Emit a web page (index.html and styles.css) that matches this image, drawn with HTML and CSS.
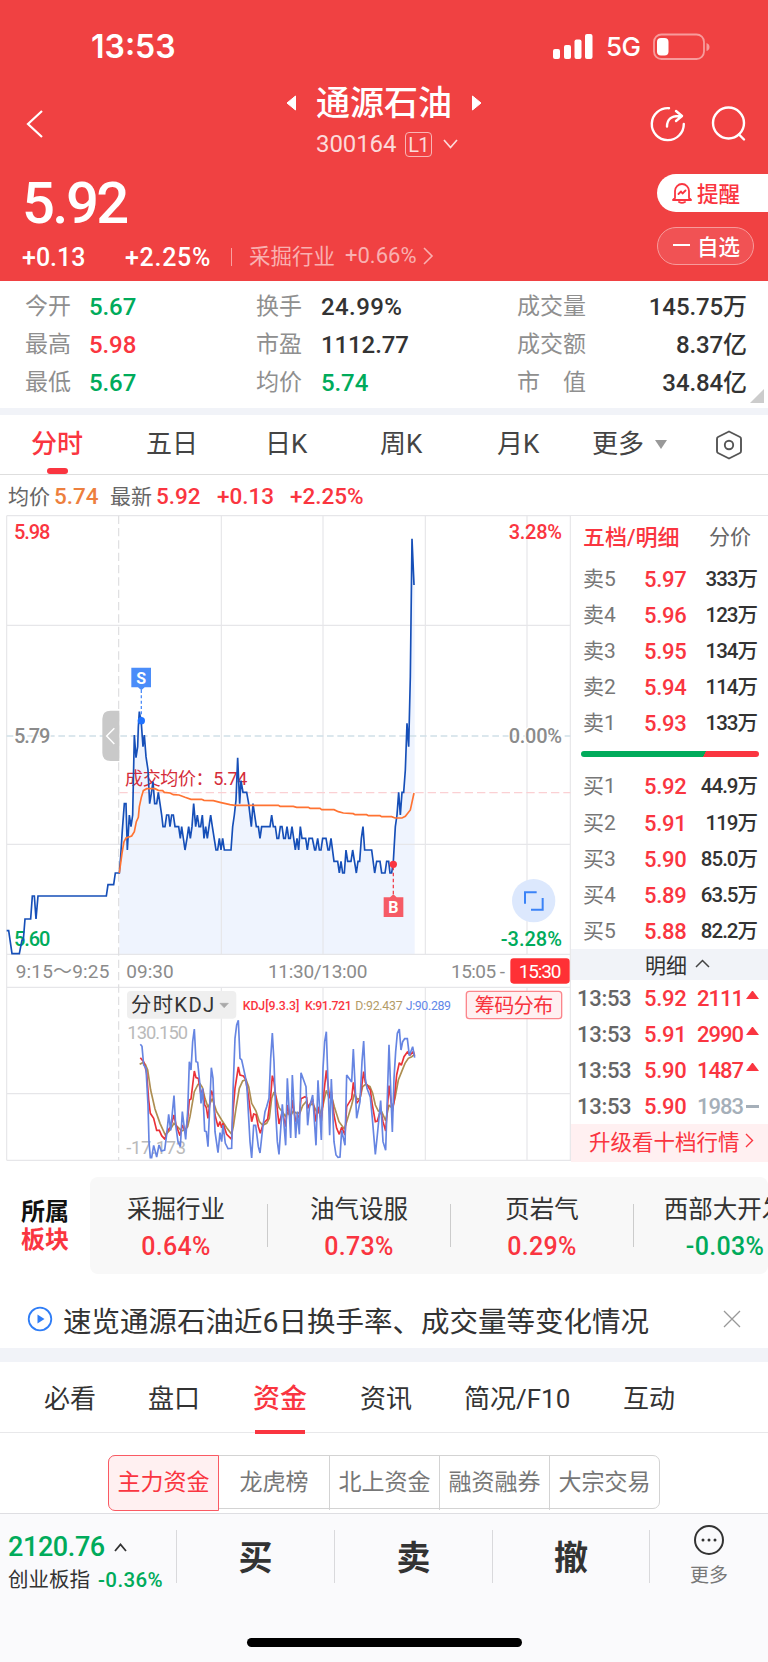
FILE: index.html
```html
<!DOCTYPE html>
<html lang="zh-CN">
<head>
<meta charset="utf-8">
<title>通源石油 300164</title>
<link rel="stylesheet" href="styles.css">
</head>
<body>
<header class="header">
  <div class="status">
    <span class="clock">13:53</span>
    <svg class="signal" width="40" height="26" viewBox="0 0 40 26" fill="#fff"><rect x="0" y="15" width="7" height="10" rx="2"/><rect x="11" y="11" width="7" height="14" rx="2"/><rect x="21.500" y="5.500" width="7" height="19.500" rx="2"/><rect x="32" y="0" width="7.500" height="25" rx="2"/></svg>
    <span class="net">5G</span>
    <svg class="battery" width="58" height="28" viewBox="0 0 58 28"><rect x="1" y="1.500" width="50" height="24.500" rx="7.500" fill="none" stroke="#f79b9b" stroke-width="1.800"/><rect x="4" y="5" width="11.500" height="17.500" rx="4" fill="#fff"/><path d="M53.500 10q3 1 3 4t-3 4z" fill="#f79b9b"/></svg>
  </div>
  <div class="nav">
    <svg class="back" width="18" height="30" viewBox="0 0 18 30" fill="none" stroke="#fff" stroke-width="2.200"><path d="M16 2 2 15l14 13"/></svg>
    <div class="title">
      <div class="name"><svg width="11" height="16" viewBox="0 0 11 16"><path d="M9.500 1v14L1 8z" fill="#fff" stroke="#fff" stroke-linejoin="round"/></svg><b>通源石油</b><svg width="11" height="16" viewBox="0 0 11 16"><path d="M1.500 1v14L10 8z" fill="#fff" stroke="#fff" stroke-linejoin="round"/></svg></div>
      <div class="code"><span>300164</span><i class="level">L1</i><svg width="15" height="10" viewBox="0 0 15 10" fill="none" stroke="#fcdada" stroke-width="1.700"><path d="m1 1 6.500 7.500L14 1"/></svg></div>
    </div>
    <div class="actions">
      <svg width="36" height="36" viewBox="0 0 36 36" fill="none" stroke="#fff" stroke-width="2.400" stroke-linecap="round" stroke-linejoin="round"><path d="M19 2.200A16 16 0 1 0 33.800 18M17 20.500c0-7 4-10.500 12-10.500M26 5l6 5-6 5"/></svg>
      <svg width="36" height="36" viewBox="0 0 36 36" fill="none" stroke="#fff" stroke-width="2.400" stroke-linecap="round"><circle cx="17.500" cy="17" r="15.500"/><path d="m28 28.500 5 5"/></svg>
    </div>
  </div>
  <div class="quote">
    <div class="prices">
      <div class="last">5.92</div>
      <div class="change"><span>+0.13</span><span class="pct">+2.25%</span><i class="bar"></i><span class="industry">采掘行业</span><span class="indpct">+0.66%</span><svg width="11" height="18" viewBox="0 0 11 18" fill="none" stroke="#f9b0b0" stroke-width="1.600"><path d="m1 1 8 8-8 8"/></svg></div>
    </div>
    <div class="buttons">
      <div class="remind"><svg width="22" height="22" viewBox="0 0 22 22" fill="none" stroke="#fa3540" stroke-width="1.800" stroke-linejoin="round" stroke-linecap="round"><path d="M4 16V9a7 7 0 0 1 14 0v7l2 2H2zM8 20q3 1.800 6 0M7.500 12l2.500-2.500 1.500 2 3-3"/></svg>提醒</div>
      <div class="fav"><i></i>自选</div>
    </div>
  </div>
</header>

<section class="stats">
  <span>今开</span><b class="green">5.67</b><span>换手</span><b class="wide">24.99%</b><span>成交量</span><b class="end">145.75万</b>
  <span>最高</span><b class="red">5.98</b><span>市盈</span><b>1112.77</b><span>成交额</span><b class="end">8.37亿</b>
  <span>最低</span><b class="green">5.67</b><span>均价</span><b class="green">5.74</b><span>市　值</span><b class="end">34.84亿</b>
  <i class="corner"></i>
</section>

<nav class="periods">
  <span class="on">分时</span><span>五日</span><span>日K</span><span>周K</span><span>月K</span><span class="more">更多<i></i></span>
  <svg width="28" height="30" viewBox="0 0 28 30" fill="none" stroke="#555" stroke-width="1.900" stroke-linejoin="round"><path d="M14 1.500 25 7q1 .5 1 2v12q0 1.500-1 2l-11 5.500L3 23q-1-.5-1-2V9q0-1.500 1-2z"/><circle cx="14" cy="15" r="4.200"/></svg>
</nav>

<div class="summary"><span>均价</span><b class="orange">5.74</b><span>最新</span><b>5.92</b><b>+0.13</b><b>+2.25%</b></div>

<main class="market">
  <svg class="chart" width="571" height="646" viewBox="0 15 1713 1938">
    <path d="M358 1089L362 1040 367 960 373 881 378 881 382 1020 388 915 393 950 398 915 403 675 408 743 413 710 418 605 424 640 429 710 433 675 444 780 449 881 459 815 464 881 475 847 489 950 506 915 536 950 555 1020 566 950 576 950 581 881 587 950 607 915 617 950 632 915 648 1020 693 1020 698 950 708 870 713 743 719 881 723 812 729 847 740 847 754 950 759 881 769 950 810 950 815 915 831 985 876 950 886 1020 901 950 906 985 922 1020 937 985 963 1020 993 985 1002 1054 1033 1089 1038 1020 1053 1054 1069 1089 1079 1054 1089 950 1094 1020 1115 1020 1124 1089 1140 1054 1155 1089 1166 1054 1175 1089 1180 1054 1186 950 1196 847 1201 915 1206 847 1211 847 1216 780 1221 640 1226 710 1231 500 1236 86 1244 225V1333H358Z" fill="#eff4fe"/>
    <g stroke="#e6e6e9" stroke-width="3.500" fill="none"><path d="M20 17H1713M20 346H1711M20 1003H1711M20 1333H1711M20 1432H1711M20 1751H1711M20 1951H1713M20 17V1951M664 17V1333M969 17V1333M1276 17V1333M1581 17V1333M664 1432V1951M969 1432V1951M1276 1432V1951M1581 1432V1951M1711 17V1951"/><path d="M356 17V1951" stroke-dasharray="25 12" stroke="#dedee0"/></g>
    <path d="M20 678H1711" stroke="#d0dfe8" stroke-width="4" stroke-dasharray="20 11"/>
    <path d="M358 848H1711" stroke="#fbd0d3" stroke-width="4" stroke-dasharray="25 12"/>
    <path d="M358 602H332q-25 0-25 25V728q0 25 25 25H358Z" fill="#c9c9c9"/>
    <path d="m343 655-23 23 23 24" fill="none" stroke="#fff" stroke-width="4.500"/>
    <g class="num" font-size="60">
      <text x="42" y="86" textLength="109" class="t-red">5.98</text><text x="1526" y="86" textLength="160" class="t-red">3.28%</text>
      <text x="42" y="698" textLength="109" class="t-gray t-mid">5.79</text><text x="1526" y="698" textLength="160" class="t-gray t-mid">0.00%</text>
      <text x="42" y="1307" textLength="109" class="t-green">5.60</text><text x="1502" y="1307" textLength="184" class="t-green">-3.28%</text>
    </g>
    <text class="num avg" x="375" y="826" font-size="54" textLength="367">成交均价：5.74</text>
    <g fill="none" stroke-width="5" stroke-linejoin="miter" stroke-miterlimit="2">
      <path stroke="#164fb8" d="M20 1262L26 1262 36 1331 58 1331 66 1290 70 1290 75 1227 92 1227 97 1158 103 1158 108 1227 114 1158 319 1158 324 1124 341 1124 346 1089 358 1089 362 1040 367 960 373 881 378 881 382 1020 388 915 393 950 398 915 403 675 408 743 413 710 415 650 418 605 424 640 429 710 433 675 438 740 444 780 449 881 454 850 459 815 464 881 470 881 475 847 480 881 485 915 489 950 495 950 500 915 506 915 510 950 515 915 520 915 525 950 536 950 541 985 545 950 555 1020 561 985 566 950 571 985 576 950 581 881 587 950 592 915 597 950 602 950 607 915 612 985 617 950 622 985 632 915 637 950 648 1020 653 1020 658 985 663 1020 668 985 673 1020 693 1020 698 950 703 915 708 870 713 743 719 881 723 812 729 847 740 847 746 881 754 950 759 881 769 950 775 950 780 985 785 950 810 950 815 915 820 950 826 950 831 985 836 985 841 950 846 950 851 985 856 985 861 950 866 985 871 985 876 950 886 1020 891 985 896 1020 901 950 906 985 917 985 922 1020 927 985 937 985 944 1020 947 1020 953 985 958 1020 963 1020 968 985 978 985 984 1020 988 1020 993 985 1002 1054 1013 1054 1018 1089 1023 1054 1028 1089 1033 1089 1038 1020 1043 1054 1053 1054 1058 1020 1069 1089 1074 1054 1079 1054 1084 985 1089 950 1094 1020 1115 1020 1124 1089 1130 1054 1140 1054 1145 1089 1155 1089 1160 1054 1166 1054 1170 1089 1175 1089 1180 1054 1186 950 1191 915 1196 847 1201 915 1206 847 1211 847 1216 780 1221 640 1226 710 1231 500 1236 86 1242 225"/>
      <path stroke="#ff7332" d="M358 1089L366 1030 372 995 378 984 395 978 403 965 409 935 415 922 418 890 424 862 430 842 440 836 465 836 475 841 488 842 493 847 510 849 520 854 537 855 555 862 573 868 605 868 612 871 640 872 660 877 690 884 705 886 835 886 840 889 880 889 890 892 925 892 930 895 960 895 965 899 1002 899 1015 905 1030 909 1060 911 1065 914 1100 914 1105 917 1140 917 1145 920 1175 920 1185 924 1206 924 1216 919 1231 900 1242 849"/>
    </g>
    <path d="M424 540V630" stroke="#4f8df7" stroke-width="4" stroke-dasharray="9 7"/><path d="M394 473H453V532H434L424 541 414 532H394Z" fill="#4b8df9"/><circle cx="424" cy="632" r="11" fill="#1f72ff"/><text class="mark" x="423.500" y="521" font-size="48">S</text>
    <path d="M1180 1070V1160" stroke="#ef4450" stroke-width="4" stroke-dasharray="11 7"/><path d="M1151 1221H1210V1162H1190L1180 1153 1170 1162H1151Z" fill="#f65b66"/><circle cx="1180" cy="1063" r="11" fill="#fa3540"/><text class="mark" x="1180" y="1210" font-size="48">B</text>
    <circle cx="1601" cy="1172" r="65" fill="#dce8fd"/><path d="M1575 1181V1147H1610M1628 1164V1199H1593" fill="none" stroke="#3b83f7" stroke-width="6"/>
    <g class="num t-gray" font-size="57">
      <text x="47" y="1405" textLength="281">9:15～9:25</text><text x="379" y="1405" textLength="142">09:30</text><text x="804" y="1405" textLength="298">11:30/13:00</text><text x="1353" y="1405" textLength="162">15:05 -</text>
      <rect x="1531" y="1345" width="178" height="76" rx="10" fill="#ff3035"/><text x="1556" y="1405" textLength="128" fill="#fff">15:30</text>
    </g>
    <rect x="381" y="1443" width="328" height="83" rx="12" fill="#efefef"/><text class="num pick" x="393" y="1506" font-size="61" textLength="250">分时KDJ</text><path d="M660 1480h25l-12.500 13z" fill="#a9a9a9" stroke="#a9a9a9" stroke-width="2"/>
    <rect x="1399" y="1444" width="286" height="82" rx="9" fill="#fff0f1" stroke="#fb868c" stroke-width="4"/><text class="num chip" x="1424" y="1508" font-size="60" textLength="236">筹码分布</text>
    <g class="num" font-size="37"><text x="728" y="1499" textLength="170" class="t-red">KDJ[9.3.3]</text><text x="915" y="1499" textLength="140" class="t-red">K:91.721</text><text x="1066" y="1499" textLength="142" fill="#b39b67">D:92.437</text><text x="1217" y="1499" textLength="136" fill="#6287e8">J:90.289</text></g>
    <g class="num" font-size="55" fill="#bababa"><text x="382" y="1587" textLength="182">130.150</text><text x="379" y="1931" textLength="179">-17.173</text></g>
    <g transform="translate(0 1305)" fill="none" stroke-width="5" stroke-miterlimit="2">
      <path stroke="#ad8e51" d="M419 358L428 353 436 358 443 375 452 435 465 492 480 535 496 570 510 555 522 535 535 548 545 558 557 553 563 545 570 515 583 440 594 418 600 416 607 427 615 460 624 487 637 461 650 500 665 525 680 548 695 568 700 545 708 490 718 430 728 408 738 404 746 425 755 475 768 498 778 530 788 541 800 535 808 520 815 460 822 441 828 455 837 488 847 500 857 515 862 503 872 512 880 498 890 505 900 503 908 482 918 470 925 483 938 476 950 500 960 505 968 485 979 436 986 455 995 455 1003 485 1017 530 1033 552 1040 530 1055 480 1063 447 1072 463 1080 460 1088 425 1097 418 1110 425 1118 445 1126 480 1135 498 1145 500 1157 527 1167 480 1177 490 1185 460 1195 405 1205 380 1215 355 1225 340 1235 335 1244 328"/>
      <path stroke="#eb3137" d="M421 338L432 352 440 385 446 465 451 505 461 520 470 556 478 556 485 572 495 583 501 560 512 545 522 510 528 540 540 572 547 540 557 562 563 520 568 465 573 462 583 378 588 398 595 400 603 450 608 432 614 480 619 488 624 520 634 437 639 450 645 510 654 545 660 530 665 548 669 535 680 568 695 583 699 500 705 430 715 366 720 390 730 393 737 403 745 450 755 530 761 507 768 509 775 545 781 565 790 535 803 522 812 455 817 392 822 410 828 460 837 537 847 500 857 545 862 480 872 525 877 465 887 530 898 510 903 461 915 455 920 458 923 490 938 462 948 530 954 485 964 528 972 440 979 376 989 460 994 440 1002 510 1010 550 1018 568 1025 547 1035 570 1040 485 1055 460 1060 412 1070 475 1080 462 1091 380 1096 412 1111 435 1117 480 1126 530 1132 528 1142 495 1149 530 1157 558 1167 422 1177 500 1182 470 1190 390 1198 353 1204 361 1212 335 1222 321 1230 330 1240 320 1244 332"/>
      <path stroke="#6685e2" d="M421 298L426 304 431 360 438 370 444 480 447 590 451 638 455 638 461 601 470 636 477 600 484 618 494 615 501 560 506 508 512 556 522 452 527 540 534 590 541 605 547 500 557 583 563 500 568 350 573 375 578 290 583 252 588 350 593 352 600 420 603 475 608 430 614 558 619 560 624 605 634 368 639 400 645 560 654 623 660 563 665 590 669 540 676 595 684 611 695 610 699 440 705 280 710 240 715 226 720 340 725 345 736 395 741 430 750 590 755 639 761 541 767 541 775 605 780 624 788 550 795 500 800 485 807 460 812 340 817 264 822 350 827 500 832 590 837 628 847 478 857 601 862 400 872 579 877 390 887 579 892 500 898 568 903 383 918 425 923 541 928 490 938 450 948 601 954 406 964 585 969 370 974 290 979 260 989 571 994 402 1002 590 1008 630 1014 637 1020 636 1025 556 1035 601 1040 390 1055 411 1060 312 1070 520 1080 470 1086 350 1091 288 1096 400 1101 430 1111 457 1117 520 1126 628 1132 570 1142 467 1149 590 1157 616 1167 299 1177 561 1182 400 1187 320 1192 265 1198 252 1203 315 1208 290 1214 281 1222 281 1228 332 1238 305 1244 338"/>
    </g>
  </svg>
  <aside class="book">
    <div class="booktabs"><b>五档/明细</b><span>分价</span></div>
    <div class="lv"><span>卖5</span><b>5.97</b><em>333万</em></div>
    <div class="lv"><span>卖4</span><b>5.96</b><em>123万</em></div>
    <div class="lv"><span>卖3</span><b>5.95</b><em>134万</em></div>
    <div class="lv"><span>卖2</span><b>5.94</b><em>114万</em></div>
    <div class="lv"><span>卖1</span><b>5.93</b><em>133万</em></div>
    <div class="ratio"><i></i></div>
    <div class="lv"><span>买1</span><b>5.92</b><em>44.9万</em></div>
    <div class="lv"><span>买2</span><b>5.91</b><em>119万</em></div>
    <div class="lv"><span>买3</span><b>5.90</b><em>85.0万</em></div>
    <div class="lv"><span>买4</span><b>5.89</b><em>63.5万</em></div>
    <div class="lv"><span>买5</span><b>5.88</b><em>82.2万</em></div>
    <div class="detail">明细<svg width="15" height="9" viewBox="0 0 15 9" fill="none" stroke="#444" stroke-width="1.500"><path d="m1 8 6.500-6.500L14 8"/></svg></div>
    <div class="tick"><span>13:53</span><b>5.92</b><em>2111</em><i class="up"></i></div>
    <div class="tick"><span>13:53</span><b>5.91</b><em>2990</em><i class="up"></i></div>
    <div class="tick"><span>13:53</span><b>5.90</b><em>1487</em><i class="up"></i></div>
    <div class="tick flat"><span>13:53</span><b>5.90</b><em>1983</em><i class="dash"></i></div>
    <div class="upgrade">升级看十档行情<svg width="9" height="15" viewBox="0 0 9 15" fill="none" stroke="#fa3540" stroke-width="1.400"><path d="m1 1 6.500 6.500L1 14"/></svg></div>
  </aside>
</main>

<section class="sectors">
  <div class="label"><span>所属</span><b>板块</b></div>
  <div class="cards">
    <div class="card"><span>采掘行业</span><b>0.64%</b></div>
    <div class="card"><span>油气设服</span><b>0.73%</b></div>
    <div class="card"><span>页岩气</span><b>0.29%</b></div>
    <div class="card"><span>西部大开发</span><b class="green">-0.03%</b></div>
  </div>
</section>

<div class="news">
  <svg width="26" height="26" viewBox="0 0 26 26"><circle cx="13" cy="13" r="11.300" fill="none" stroke="#2f7df6" stroke-width="1.800"/><path d="M10.500 8.500v9l7-4.500z" fill="#2f7df6"/></svg>
  <span>速览通源石油近6日换手率、成交量等变化情况</span>
  <svg width="18" height="18" viewBox="0 0 18 18" stroke="#999" stroke-width="1.300"><path d="m1 1 16 16M17 1 1 17"/></svg>
</div>

<nav class="tabs"><span>必看</span><span>盘口</span><span class="on">资金</span><span>资讯</span><span>简况/F10</span><span>互动</span></nav>

<div class="segwrap"><div class="segments"><span class="on">主力资金</span><span>龙虎榜</span><span>北上资金</span><span>融资融券</span><span>大宗交易</span></div></div>

<footer class="footer">
  <div class="trade">
    <div class="index"><div class="points">2120.76<svg width="13" height="9" viewBox="0 0 13 9" fill="none" stroke="#333" stroke-width="1.800"><path d="m1 8 5.500-6.500L12 8"/></svg></div><div class="idxname">创业板指<b>-0.36%</b></div></div>
    <div class="act">买</div><div class="act">卖</div><div class="act">撤</div>
    <div class="dots"><svg width="32" height="32" viewBox="0 0 32 32"><circle cx="16" cy="16" r="14" fill="none" stroke="#333" stroke-width="2"/><g fill="#333"><circle cx="10" cy="16" r="1.500"/><circle cx="16" cy="16" r="1.500"/><circle cx="22" cy="16" r="1.500"/></g></svg><span>更多</span></div>
  </div>
  <i class="home"></i>
</footer>
</body>
</html>
```
FILE: styles.css
```css
* { box-sizing: border-box; }
body { margin: 0; width: 768px; height: 1662px; overflow: hidden; background: #fff; color: #333; font-family: Roboto, "Noto Sans CJK SC", sans-serif; white-space: nowrap; }
b { font-weight: 500; }
i, em { font-style: normal; }
svg { display: block; flex: none; }
.red { color: #fa3540; }
.green { color: #00ab5b; }

.header { height: 281px; background: #f04142; color: #fff; }
.status { display: flex; align-items: center; height: 84px; padding: 9px 57px 0 91px; }
.clock { flex: 1; font: 600 32px/40px Inter, sans-serif; letter-spacing: 0; }
.signal { margin-right: 13px; }
.net { width: 36px; font: 500 26px/40px Inter, sans-serif; letter-spacing: -.5px; margin-right: 11px; }
.nav { display: grid; grid-template-columns: 240px 288px 240px; height: 84px; }
.back { margin: 25px 0 0 26px; }
.name { display: flex; align-items: center; justify-content: center; gap: 19px; height: 38px; }
.name b { font-size: 34px; line-height: 38px; }
.code { display: flex; align-items: center; height: 44px; padding-left: 76px; font-size: 24px; color: #fcdada; }
.code span { width: 89px; letter-spacing: -.1px; }
.level { width: 27px; height: 25px; margin-right: 11px; border: 1px solid #f9b5b5; border-radius: 4px; font-size: 20px; line-height: 24px; text-align: center; letter-spacing: -.8px; }
.actions { display: flex; gap: 25px; padding: 22px 0 0 122px; }
.quote { display: flex; justify-content: space-between; }
.last { height: 70px; padding-left: 22px; font-weight: 500; font-size: 58px; line-height: 70px; letter-spacing: -2.600px; }
.change { display: grid; grid-template-columns: 103px 106px 18px 96px 78px 12px; align-items: center; height: 38px; padding-left: 22px; font-size: 25px; font-weight: 500; }
.change .pct { letter-spacing: .7px; }
.bar { width: 1px; height: 18px; background: #f9a0a0; }
.change .industry { padding-bottom: 5px; font-size: 21.500px; font-weight: 400; color: #f9b0b0; }
.change .indpct { padding-bottom: 3px; font-size: 22px; font-weight: 400; color: #f9b0b0; }
.change svg { margin-top: -3px; }
.buttons { width: 111px; padding-top: 6px; font-size: 21.500px; font-weight: 500; }
.remind { display: flex; align-items: center; gap: 4px; height: 38px; padding: 0 0 1px 14px; background: #fff; color: #fa3540; border-radius: 19px 0 0 19px; }
.fav { display: flex; align-items: center; gap: 7px; width: 97px; height: 38px; margin-top: 15px; padding: 0 0 2px 15px; border: 1px solid #f79b9b; border-radius: 19px; background: #f15254; }
.fav i { width: 17px; height: 2px; background: #fff; }

.stats { position: relative; display: grid; grid-template-columns: 64px 167px 65px 196px 110px 120px; grid-template-rows: repeat(3, 37.700px); align-items: center; height: 127px; padding: 7px 0 0 25px; font-size: 24px; }
.stats span { padding-bottom: 5px; font-size: 23px; color: #8f8f8f; }
.stats b { letter-spacing: -.1px; padding-top: 1px; }
.stats .wide { letter-spacing: .4px; }
.stats .end { padding: 0 0 4px; text-align: right; }
.corner { position: absolute; right: 4px; bottom: 5px; border: solid transparent; border-width: 0 0 14px 14px; border-bottom-color: #ccc; }

.periods { display: flex; align-items: center; height: 67px; border-top: 7px solid #f1f3f8; border-bottom: 1px solid #dedede; padding-left: 31px; font-size: 26px; color: #444; }
.periods span { position: relative; width: 115px; line-height: 61px; }
.periods span:nth-child(2) { width: 119px; }
.periods span:nth-child(3) { width: 115px; }
.periods span:nth-child(4) { width: 117px; }
.periods span:nth-child(5) { width: 95px; }
.periods .more { display: flex; align-items: center; gap: 11px; width: 123px; }
.more i { border: solid transparent; border-width: 9px 6.500px 0; border-top-color: #999; }
.periods .on { color: #fa3540; font-weight: 500; }
.periods .on::after { content: ""; position: absolute; left: 16px; bottom: 1px; width: 21px; height: 6px; border-radius: 3px; background: #fa3540; }

.summary { display: grid; grid-template-columns: 46px 56px 46px 61px 73px 90px; align-items: center; height: 40px; padding: 2px 0 0 8px; font-size: 22.500px; color: #fa3540; }
.summary span { padding-bottom: 3px; font-size: 21px; color: #666; }
.summary b { letter-spacing: 0; }
.summary .orange { color: #ed7f3e; }

.market { display: flex; height: 646px; }
.num { font-family: Roboto, "Noto Sans CJK SC", sans-serif; }
.t-red { fill: #fa3540; font-weight: 500; }
.t-gray { fill: #8b8b8b; }
.t-mid { paint-order: stroke; stroke: #fff; stroke-width: 8px; font-weight: 500; }
.t-green { fill: #00ab5b; font-weight: 500; }
.avg { fill: #d52d3a; }
.pick { fill: #333; }
.chip { fill: #f8333d; }
.mark { fill: #fff; font-family: Roboto, sans-serif; font-weight: 700; text-anchor: middle; }

.book { width: 197px; border-top: 1px solid #e6e6e9; }
.booktabs { display: flex; justify-content: space-between; height: 46px; padding: 0 17px 0 12px; line-height: 43px; font-size: 21px; color: #666; }
.booktabs b { color: #fa3540; font-size: 22px; }
.lv { display: grid; grid-template-columns: 61px 40px 1fr; height: 36.100px; line-height: 35px; padding: 0 11px 0 12px; font-size: 22px; }
.lv span { font-size: 21px; color: #777; }
.lv b, .tick b { color: #fa3540; letter-spacing: -.3px; }
.lv em { text-align: right; font-weight: 500; font-size: 20.500px; letter-spacing: -1px; }
.ratio { height: 6px; margin: 9px 9px 12px 10px; background: linear-gradient(120deg, #00ab5b 69%, #fa3540 69%); border-radius: 3px; }
.detail { display: flex; align-items: center; justify-content: center; gap: 8px; height: 31px; margin-top: -1px; padding: 0 0 1px 16px; background: #f1f3f8; font-size: 21px; }
.tick { display: grid; grid-template-columns: 67px 53px 46px 13px; column-gap: 0; height: 36.100px; line-height: 37px; padding-left: 6px; font-size: 22px; }
.tick span { color: #666; letter-spacing: -.3px; font-weight: 500; }
.tick em { color: #fa3540; text-align: right; font-weight: 500; letter-spacing: -1px; }
.up { margin: 11px 0 0 3px; width: 13px; height: 0; border: solid transparent; border-width: 0 6.500px 8px; border-bottom-color: #fa3540; }
.flat em { color: #a5afb9; }
.dash { width: 13px; height: 3px; margin: 17px 0 0 3px; background: #a5afb9; }
.upgrade { display: flex; align-items: center; gap: 5px; height: 38px; padding: 0 0 5px 18px; background: #fff0f1; color: #fa3540; font-size: 21.500px; }

.sectors { display: flex; height: 113px; padding-top: 16px; }
.label { display: flex; flex-direction: column; width: 90px; padding: 21px 0 0 21px; font-size: 24px; line-height: 28px; font-weight: 700; color: #111; }
.label b { color: #fa3540; font-weight: 700; }
.cards { display: flex; width: 678px; height: 97px; overflow: hidden; background: #f8f8f8; border-radius: 8px; }
.card { position: relative; flex: none; width: 183px; height: 97px; padding: 15px 11px 0 0; display: flex; flex-direction: column; align-items: center; font-size: 24.500px; line-height: 37px; }
.card span { line-height: 36px; }
.card b { color: #fa3540; font-size: 25px; letter-spacing: .3px; }
.card b.green { color: #00ab5b; }
.card + .card::before { content: ""; position: absolute; left: -6px; top: 27px; width: 1px; height: 43px; background: #ccc; }

.news { display: flex; align-items: center; height: 88px; padding: 16px 27px 0 27px; border-bottom: 14px solid #f1f3f8; }
.news span { flex: 1; padding-left: 10px; font-size: 28.500px; }

.tabs { display: grid; grid-template-columns: 104px 105px 107px 104px 159px 60px; height: 71px; padding-left: 44px; border-bottom: 1px solid #e8e8ea; font-size: 26px; line-height: 74px; }
.tabs .on { position: relative; color: #fa3540; font-weight: 500; font-size: 27px; }
.tabs .on::after { content: ""; position: absolute; left: 2px; bottom: 2px; width: 50px; height: 4px; background: #fa3540; }

.segwrap { height: 80px; padding: 22px 0 0 108px; }
.segments { display: grid; grid-template-columns: repeat(5, 1fr); width: 552px; height: 54px; border: 1px solid #d3d3d3; border-radius: 7px; font-size: 23px; line-height: 54px; color: #777; text-align: center; }
.segments span + span + span { border-left: 1px solid #d3d3d3; }
.segments .on { margin: -1px 0 -1px -1px; border: 1px solid #fa5a63; border-radius: 7px 0 0 7px; background: #fff0f1; color: #fa3540; }

.footer { height: 149px; border-top: 1px solid #dedee2; background: #fafafc; }
.trade { display: grid; grid-template-columns: 176px 158px 158px 157px 119px; height: 124px; padding-top: 16px; }
.points { display: flex; align-items: center; gap: 9px; height: 34px; padding-left: 8px; font-weight: 500; font-size: 27px; letter-spacing: -.4px; color: #00ab5b; }
.idxname { padding-left: 8px; font-size: 20.500px; line-height: 32px; }
.idxname b { margin-left: 8px; color: #00ab5b; letter-spacing: .4px; }
.act { height: 53px; border-left: 1px solid #d9d9dc; font-size: 34px; line-height: 56px; font-weight: 700; text-align: center; }
.dots { display: flex; flex-direction: column; align-items: center; height: 53px; border-left: 1px solid #d9d9dc; font-size: 19px; line-height: 30px; color: #777; }
.dots svg { margin-top: -6px; margin-bottom: 5px; }
.home { display: block; width: 275px; height: 9px; margin: 0 0 0 247px; border-radius: 5px; background: #000; }
```
